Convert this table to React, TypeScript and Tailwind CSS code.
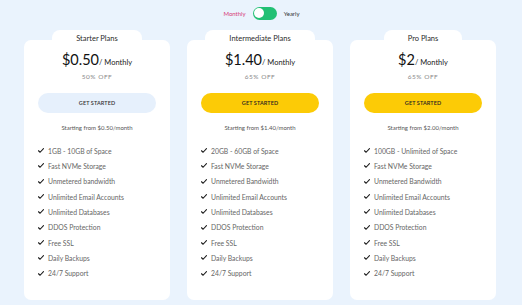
const plans = [
  {
    name: 'Starter Plans',
    price: '$0.50',
    off: '50% OFF',
    from: '$0.50',
    highlight: false,
    features: [
      '1GB - 10GB of Space',
      'Fast NVMe Storage',
      'Unmetered bandwidth',
      'Unlimited Email Accounts',
      'Unlimited Databases',
      'DDOS Protection',
      'Free SSL',
      'Daily Backups',
      '24/7 Support',
    ],
  },
  {
    name: 'Intermediate Plans',
    price: '$1.40',
    off: '65% OFF',
    from: '$1.40',
    highlight: true,
    features: [
      '20GB - 60GB of Space',
      'Fast NVMe Storage',
      'Unmetered Bandwidth',
      'Unlimited Email Accounts',
      'Unlimited Databases',
      'DDOS Protection',
      'Free SSL',
      'Daily Backups',
      '24/7 Support',
    ],
  },
  {
    name: 'Pro Plans',
    price: '$2',
    off: '65% OFF',
    from: '$2.00',
    highlight: true,
    features: [
      '100GB - Unlimited of Space',
      'Fast NVMe Storage',
      'Unmetered Bandwidth',
      'Unlimited Email Accounts',
      'Unlimited Databases',
      'DDOS Protection',
      'Free SSL',
      'Daily Backups',
      '24/7 Support',
    ],
  },
];

const Check = () => (
  <svg width="6" height="5" viewBox="0 0 12 10" className="shrink-0">
    <path d="M1 5.5 L4.2 8.5 L11 1.2" fill="none" stroke="#1a1a1a" strokeWidth="2.2" strokeLinecap="round" strokeLinejoin="round" />
  </svg>
);

const App = () => {
  return (
    <div
      className="w-full h-[305px] bg-[#eaf3fd] overflow-hidden"
      style={{ fontFamily: 'Lato, "Open Sans", sans-serif' }}
    >
      {/* Billing toggle */}
      <div className="flex items-center justify-center gap-[7px] pt-[6px] h-[20px] pl-[1px]">
        <span className="text-[6px] text-[#d63b78]">Monthly</span>
        <div className="w-[24px] h-[13px] rounded-full bg-[#22c074] flex items-center pl-[1.5px]">
          <div className="w-[10px] h-[10px] rounded-full bg-white" />
        </div>
        <span className="text-[6px] text-[#333]">Yearly</span>
      </div>

      {/* Plan cards */}
      <div className="flex gap-[17px] pl-[24px] pt-[10px]">
        {plans.map((plan) => (
          <div key={plan.name} className="w-[146px] flex flex-col">
            <div className="self-center relative z-10 bg-white rounded-t-[8px] px-[24px] h-[14px] pt-[3px] text-[7.5px] leading-[11px] text-[#2b2b2b]">
              {plan.name}
            </div>
            <div className="-mt-[4px] bg-white rounded-[7px] flex flex-col items-center pt-[10px] pb-[19px]">
              <div className="flex items-baseline h-[20px] leading-[20px]">
                <span className="text-[14.5px] text-[#111]">{plan.price}</span>
                <span className="text-[7.5px] text-[#222]">/ Monthly</span>
              </div>
              <div className="mt-[3px] text-[6.5px] leading-[8px] tracking-[0.5px] text-[#888]">{plan.off}</div>
              <button
                className={`mt-[12px] self-stretch mx-[14px] h-[20px] rounded-full text-[5.5px] font-semibold tracking-[0.1px] ${
                  plan.highlight ? 'bg-[#fccb06] text-[#222]' : 'bg-[#e6f0fc] text-[#333]'
                }`}
              >
                GET STARTED
              </button>
              <div className="mt-[10px] text-[6px] leading-[10px] text-[#555]">
                Starting from {plan.from}/month
              </div>
              <ul className="mt-[10px] self-stretch pl-[14px]">
                {plan.features.map((f) => (
                  <li key={f} className="h-[15.33px] flex items-center gap-[4px] text-[6.8px] text-[#666]">
                    <Check />
                    {f}
                  </li>
                ))}
              </ul>
            </div>
          </div>
        ))}
      </div>
    </div>
  );
};

export default App;
